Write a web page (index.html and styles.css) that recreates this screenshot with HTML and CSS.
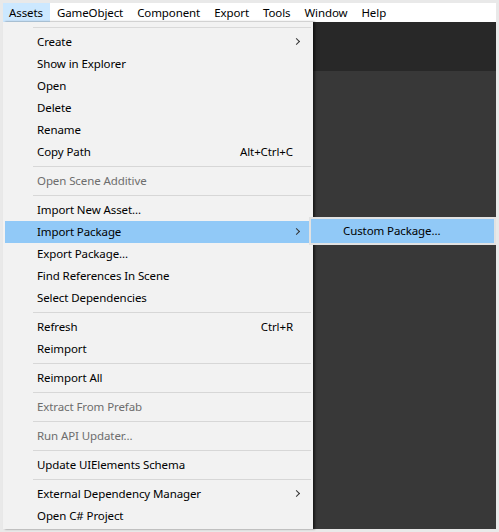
FILE: index.html
```html
<!DOCTYPE html>
<html>
<head>
<meta charset="utf-8">
<link rel="stylesheet" href="styles.css">
</head>
<body>
<div class="frame">
  <div class="menubar">
    <span class="mb-item active">Assets</span>
    <span class="mb-item">GameObject</span>
    <span class="mb-item">Component</span>
    <span class="mb-item">Export</span>
    <span class="mb-item">Tools</span>
    <span class="mb-item">Window</span>
    <span class="mb-item">Help</span>
  </div>
  <div class="workspace">
    <div class="menu">
      <div class="menu-top"></div>
      <div class="item sub"><span>Create</span></div>
      <div class="item"><span>Show in Explorer</span></div>
      <div class="item"><span>Open</span></div>
      <div class="item"><span>Delete</span></div>
      <div class="item"><span>Rename</span></div>
      <div class="item"><span>Copy Path</span><span class="key">Alt+Ctrl+C</span></div>
      <div class="sep"></div>
      <div class="item disabled"><span>Open Scene Additive</span></div>
      <div class="sep"></div>
      <div class="item"><span>Import New Asset...</span></div>
      <div class="item sub hot"><span>Import Package</span>
        <div class="submenu"><div class="sub-item">Custom Package...</div></div>
      </div>
      <div class="item"><span>Export Package...</span></div>
      <div class="item"><span>Find References In Scene</span></div>
      <div class="item"><span>Select Dependencies</span></div>
      <div class="sep"></div>
      <div class="item"><span>Refresh</span><span class="key">Ctrl+R</span></div>
      <div class="item"><span>Reimport</span></div>
      <div class="sep"></div>
      <div class="item"><span>Reimport All</span></div>
      <div class="sep"></div>
      <div class="item disabled"><span>Extract From Prefab</span></div>
      <div class="sep"></div>
      <div class="item disabled"><span>Run API Updater...</span></div>
      <div class="sep"></div>
      <div class="item"><span>Update UIElements Schema</span></div>
      <div class="sep"></div>
      <div class="item sub"><span>External Dependency Manager</span></div>
      <div class="item"><span>Open C# Project</span></div>
    </div>
    <div class="editor">
      <div class="editor-top"></div>
      <div class="editor-body"></div>
    </div>
  </div>
</div>
</body>
</html>
```
FILE: styles.css
```css
html, body {
  margin: 0;
  padding: 0;
}
body {
  width: 499px;
  height: 532px;
  background: #e9e9e9;
  font-family: "Noto Sans", "Liberation Sans", sans-serif;
  font-size: 11.5px;
  letter-spacing: -0.1px;
  color: #000;
}
.frame {
  padding: 3px;
  height: 532px;
  box-sizing: border-box;
  display: flex;
  flex-direction: column;
}
.menubar {
  height: 19px;
  background: #fff;
  display: flex;
  align-items: stretch;
}
.mb-item {
  display: flex;
  align-items: center;
  padding: 0 7px 0 7px;
  line-height: 19px;
}
.mb-item.active {
  padding-left: 6px;
  background: #cce8ff;
}
.workspace {
  flex: 1;
  display: flex;
  min-height: 0;
}
.menu {
  width: 310px;
  background: #f2f2f2;
  padding: 0 2px 2px 2px;
  box-sizing: border-box;
  position: relative;
  z-index: 2;
  box-shadow: 2px 0 2px rgba(0,0,0,0.55);
}
.menu-top {
  height: 9px;
  position: relative;
}
.menu-top::after {
  content: "";
  position: absolute;
  left: 28px;
  right: 0;
  top: 5px;
  height: 1px;
  background: #d9d9d9;
}
.item {
  height: 22px;
  display: flex;
  align-items: center;
  justify-content: space-between;
  padding: 0 18px 0 32px;
  position: relative;
  line-height: 22px;
}
.item.disabled {
  color: #6d6d6d;
}
.item.hot {
  background: #91c9f7;
}
.item.sub::after {
  content: "";
  position: absolute;
  right: 12px;
  top: 8px;
  width: 4px;
  height: 4px;
  border-right: 1px solid #333;
  border-bottom: 1px solid #333;
  transform: rotate(-45deg);
}
.key {
  text-align: right;
}
.sep {
  height: 7px;
  position: relative;
}
.sep::after {
  content: "";
  position: absolute;
  left: 28px;
  right: 0;
  top: 3px;
  height: 1px;
  background: #d7d7d7;
}
.submenu {
  position: absolute;
  left: 304px;
  top: -4px;
  width: 187px;
  height: 28px;
  box-sizing: border-box;
  border: 2px solid #e2e2e2;
  background: #f2f2f2;
}
.sub-item {
  height: 24px;
  line-height: 24px;
  background: #91c9f7;
  padding-left: 32px;
  color: #000;
}
.editor {
  flex: 1;
  display: flex;
  flex-direction: column;
}
.editor-top {
  height: 49px;
  background: #282828;
}
.editor-body {
  flex: 1;
  background: #383838;
}
```
